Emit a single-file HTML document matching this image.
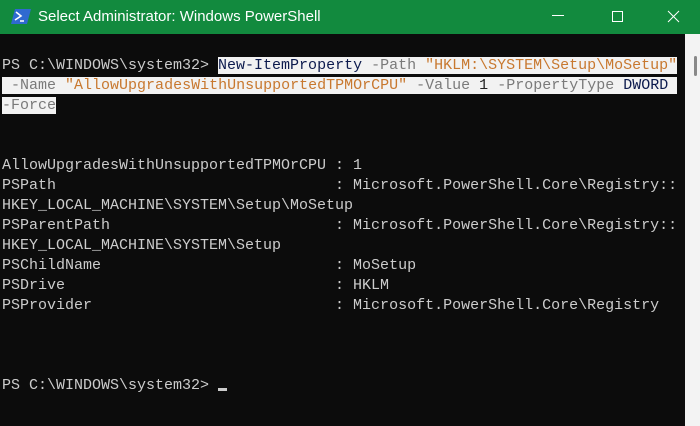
<!DOCTYPE html>
<html><head><style>
*{margin:0;padding:0}
html,body{width:700px;height:426px;overflow:hidden}
body{background:#0c0c0c;position:relative;font-family:"Liberation Sans",sans-serif}
#tb{position:absolute;left:0;top:0;width:700px;height:34px;background:#128a3e;color:#fff}
#tb .t{position:absolute;left:38px;top:8px;font-size:15px}
#term{position:absolute;left:0;top:56px;width:685px;font-family:"Liberation Mono",monospace;font-size:15px;line-height:20px;color:#cccccc}
.r{height:20px;padding-left:2px;white-space:pre}
.s{background:#f2f2f2}
.c{color:#0c1a4d}.p{color:#7a7a7a}.q{color:#c8782f}.d{color:#222}
#sb{position:absolute;left:685px;top:34px;width:15px;height:392px;background:#f3f3f3}
#th{position:absolute;left:694px;top:56px;width:3px;height:20px;background:#888;border-radius:2px}
</style></head><body>
<div id="tb">
<svg style="position:absolute;left:11px;top:8px" width="20" height="17" viewBox="0 0 20 17"><path d="M4 1H20L16 16H0Z" fill="#2f6ad0"/><path d="M5 4L10 8L4 12" stroke="#fff" stroke-width="1.6" fill="none"/><path d="M9 13H13" stroke="#fff" stroke-width="1.5"/></svg>
<span class="t">Select Administrator: Windows PowerShell</span>
<svg style="position:absolute;left:552px;top:10px" width="140" height="14"><path d="M0 5.5H12" stroke="#fff" stroke-width="1"/><rect x="60.5" y="1.5" width="10" height="10" fill="none" stroke="#fff"/><path d="M116 1L127 12M127 1L116 12" stroke="#fff" stroke-width="1"/></svg>
</div>
<div id="sb"></div><div id="th"></div>
<div id="term"><div class="r">PS C:\WINDOWS\system32&gt; <span class="s"><span class="c">New-ItemProperty</span> <span class="p">-Path</span> <span class="q">"HKLM:\SYSTEM\Setup\MoSetup"</span></span></div><div class="r"><span class="s"> <span class="p">-Name</span> <span class="q">"AllowUpgradesWithUnsupportedTPMOrCPU"</span> <span class="p">-Value</span> <span class="d">1</span> <span class="p">-PropertyType</span> <span class="c">DWORD</span> </span></div><div class="r"><span class="s"><span class="p">-Force</span></span></div><div class="r"></div><div class="r"></div><div class="r">AllowUpgradesWithUnsupportedTPMOrCPU : 1</div><div class="r">PSPath                               : Microsoft.PowerShell.Core\Registry::</div><div class="r">HKEY_LOCAL_MACHINE\SYSTEM\Setup\MoSetup</div><div class="r">PSParentPath                         : Microsoft.PowerShell.Core\Registry::</div><div class="r">HKEY_LOCAL_MACHINE\SYSTEM\Setup</div><div class="r">PSChildName                          : MoSetup</div><div class="r">PSDrive                              : HKLM</div><div class="r">PSProvider                           : Microsoft.PowerShell.Core\Registry</div><div class="r"></div><div class="r"></div><div class="r"></div><div class="r">PS C:\WINDOWS\system32&gt; <span style="display:inline-block;width:9px;height:3px;background:#ccc;vertical-align:-2px"></span></div></div>
</body></html>
